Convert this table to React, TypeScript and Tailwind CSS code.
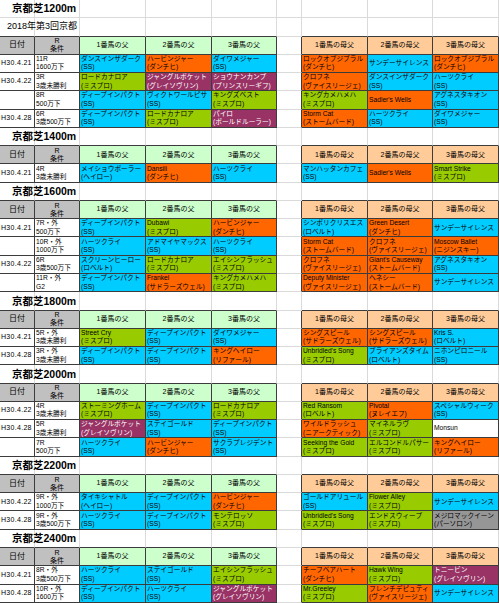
type Color = 'b' | 'o' | 'g' | 'p' | 'w' | 'k';

type Horse = { t: string; s?: string; c: Color };

type Race = { d: string; r: string; j: string; h: Horse[] };

type Section = { dist: string; races: Race[] };

const bg: Record<Color, string> = {
  b: 'bg-[#00ccff] text-black',
  o: 'bg-[#ff6600] text-black',
  g: 'bg-[#99cc00] text-black',
  p: 'bg-[#993366] text-white',
  w: 'bg-white text-black',
  k: 'bg-[#969696] text-black',
};

const sections: Section[] = [
  {
    dist: '1200m',
    races: [
      {
        d: 'H30.4.21', r: '11R', j: '1600万下',
        h: [
          { t: 'ダンスインザダーク', s: '(SS)', c: 'b' },
          { t: 'ハービンジャー', s: '(ダンチヒ)', c: 'o' },
          { t: 'ダイワメジャー', s: '(SS)', c: 'b' },
          { t: 'ロックオブジブラル', s: '(ダンチヒ)', c: 'o' },
          { t: 'サンデーサイレンス', c: 'b' },
          { t: 'ロックオブジブラル', s: '(ダンチヒ)', c: 'o' },
        ],
      },
      {
        d: 'H30.4.22', r: '3R', j: '3歳未勝利',
        h: [
          { t: 'ロードカナロア', s: '(ミスプロ)', c: 'g' },
          { t: 'ジャングルポケット', s: '(グレイソヴリン)', c: 'p' },
          { t: 'ショウナンカンプ', s: '(プリンスリーギフ)', c: 'p' },
          { t: 'クロフネ', s: '(ヴァイスリージェ)', c: 'o' },
          { t: 'ダンスインザダーク', s: '(SS)', c: 'b' },
          { t: 'ハーツクライ', s: '(SS)', c: 'b' },
        ],
      },
      {
        d: '', r: '8R', j: '500万下',
        h: [
          { t: 'ディープインパクト', s: '(SS)', c: 'b' },
          { t: 'ヴィクトワールピサ', s: '(SS)', c: 'b' },
          { t: 'キングズベスト', s: '(ミスプロ)', c: 'g' },
          { t: 'キングカメハメハ', s: '(ミスプロ)', c: 'g' },
          { t: "Sadler's Wells", c: 'o' },
          { t: 'アグネスタキオン', s: '(SS)', c: 'b' },
        ],
      },
      {
        d: 'H30.4.28', r: '6R', j: '3歳500万下',
        h: [
          { t: 'ディープインパクト', s: '(SS)', c: 'b' },
          { t: 'ロードカナロア', s: '(ミスプロ)', c: 'g' },
          { t: 'パイロ', s: '(ボールドルーラー)', c: 'p' },
          { t: 'Storm Cat', s: '(ストームバード)', c: 'o' },
          { t: 'ハーツクライ', s: '(SS)', c: 'b' },
          { t: 'ダイワメジャー', s: '(SS)', c: 'b' },
        ],
      },
    ],
  },
  {
    dist: '1400m',
    races: [
      {
        d: 'H30.4.21', r: '4R', j: '3歳未勝利',
        h: [
          { t: 'メイショウボーラー', s: '(ヘイロー)', c: 'b' },
          { t: 'Dansili', s: '(ダンチヒ)', c: 'o' },
          { t: 'ハーツクライ', s: '(SS)', c: 'b' },
          { t: 'マンハッタンカフェ', s: '(SS)', c: 'b' },
          { t: "Sadler's Wells", c: 'o' },
          { t: 'Smart Strike', s: '(ミスプロ)', c: 'g' },
        ],
      },
    ],
  },
  {
    dist: '1600m',
    races: [
      {
        d: 'H30.4.21', r: '7R・外', j: '500万下',
        h: [
          { t: 'ディープインパクト', s: '(SS)', c: 'b' },
          { t: 'Dubawi', s: '(ミスプロ)', c: 'g' },
          { t: 'ハービンジャー', s: '(ダンチヒ)', c: 'o' },
          { t: 'シンボリクリスエス', s: '(ロベルト)', c: 'b' },
          { t: 'Green Desert', s: '(ダンチヒ)', c: 'o' },
          { t: 'サンデーサイレンス', c: 'b' },
        ],
      },
      {
        d: '', r: '10R・外', j: '1000万下',
        h: [
          { t: 'ハーツクライ', s: '(SS)', c: 'b' },
          { t: 'アドマイヤマックス', s: '(SS)', c: 'b' },
          { t: 'ハーツクライ', s: '(SS)', c: 'b' },
          { t: 'Storm Cat', s: '(ストームバード)', c: 'o' },
          { t: 'クロフネ', s: '(ヴァイスリージェ)', c: 'o' },
          { t: 'Moscow Ballet', s: '(ニジンスキー)', c: 'o' },
        ],
      },
      {
        d: 'H30.4.22', r: '6R', j: '3歳500万下',
        h: [
          { t: 'スクリーンヒーロー', s: '(ロベルト)', c: 'b' },
          { t: 'ロードカナロア', s: '(ミスプロ)', c: 'g' },
          { t: 'エイシンフラッシュ', s: '(ミスプロ)', c: 'g' },
          { t: 'クロフネ', s: '(ヴァイスリージェ)', c: 'o' },
          { t: "Giant's Causeway", s: '(ストームバード)', c: 'o' },
          { t: 'アグネスタキオン', s: '(SS)', c: 'b' },
        ],
      },
      {
        d: '', r: '11R・外', j: 'G2',
        h: [
          { t: 'ディープインパクト', s: '(SS)', c: 'b' },
          { t: 'Frankel', s: '(サドラーズウェル)', c: 'o' },
          { t: 'キングカメハメハ', s: '(ミスプロ)', c: 'g' },
          { t: 'Deputy Minister', s: '(ヴァイスリージェ)', c: 'o' },
          { t: 'ヘネシー', s: '(ストームバード)', c: 'o' },
          { t: 'サンデーサイレンス', c: 'b' },
        ],
      },
    ],
  },
  {
    dist: '1800m',
    races: [
      {
        d: 'H30.4.21', r: '5R・外', j: '3歳未勝利',
        h: [
          { t: 'Street Cry', s: '(ミスプロ)', c: 'g' },
          { t: 'ディープインパクト', s: '(SS)', c: 'b' },
          { t: 'ダイワメジャー', s: '(SS)', c: 'b' },
          { t: 'シングスピール', s: '(サドラーズウェル)', c: 'o' },
          { t: 'シングスピール', s: '(サドラーズウェル)', c: 'o' },
          { t: 'Kris S.', s: '(ロベルト)', c: 'b' },
        ],
      },
      {
        d: 'H30.4.28', r: '3R・外', j: '3歳未勝利',
        h: [
          { t: 'ディープインパクト', s: '(SS)', c: 'b' },
          { t: 'ディープインパクト', s: '(SS)', c: 'b' },
          { t: 'キングヘイロー', s: '(リファール)', c: 'o' },
          { t: "Unbridled's Song", s: '(ミスプロ)', c: 'g' },
          { t: 'ブライアンズタイム', s: '(ロベルト)', c: 'b' },
          { t: 'ニホンピロニール', s: '(SS)', c: 'b' },
        ],
      },
    ],
  },
  {
    dist: '2000m',
    races: [
      {
        d: 'H30.4.22', r: '4R', j: '3歳未勝利',
        h: [
          { t: 'ストーミングホーム', s: '(ミスプロ)', c: 'g' },
          { t: 'ディープインパクト', s: '(SS)', c: 'b' },
          { t: 'ロードカナロア', s: '(ミスプロ)', c: 'g' },
          { t: 'Red Ransom', s: '(ロベルト)', c: 'g' },
          { t: 'Pivotal', s: '(ヌレイエフ)', c: 'o' },
          { t: 'スペシャルウィーク', s: '(SS)', c: 'b' },
        ],
      },
      {
        d: 'H30.4.28', r: '5R', j: '3歳未勝利',
        h: [
          { t: 'ジャングルポケット', s: '(グレイソヴリン)', c: 'p' },
          { t: 'ステイゴールド', s: '(SS)', c: 'b' },
          { t: 'ディープインパクト', s: '(SS)', c: 'b' },
          { t: 'ワイルドラッシュ', s: '(ニアークティック)', c: 'o' },
          { t: 'マイネルラヴ', s: '(ミスプロ)', c: 'g' },
          { t: 'Monsun', c: 'w' },
        ],
      },
      {
        d: '', r: '7R', j: '500万下',
        h: [
          { t: 'ハーツクライ', s: '(SS)', c: 'b' },
          { t: 'ハービンジャー', s: '(ダンチヒ)', c: 'o' },
          { t: 'サクラプレジデント', s: '(SS)', c: 'b' },
          { t: 'Seeking the Gold', s: '(ミスプロ)', c: 'g' },
          { t: 'エルコンドルパサー', s: '(ミスプロ)', c: 'g' },
          { t: 'キングヘイロー', s: '(リファール)', c: 'o' },
        ],
      },
    ],
  },
  {
    dist: '2200m',
    races: [
      {
        d: 'H30.4.22', r: '9R・外', j: '1000万下',
        h: [
          { t: 'タイキシャトル', s: '(ヘイロー)', c: 'b' },
          { t: 'ディープインパクト', s: '(SS)', c: 'b' },
          { t: 'ハービンジャー', s: '(ダンチヒ)', c: 'o' },
          { t: 'ゴールドアリュール', s: '(SS)', c: 'b' },
          { t: 'Flower Alley', s: '(ミスプロ)', c: 'g' },
          { t: 'サンデーサイレンス', c: 'b' },
        ],
      },
      {
        d: 'H30.4.28', r: '9R・外', j: '3歳500万下',
        h: [
          { t: 'ハーツクライ', s: '(SS)', c: 'b' },
          { t: 'ディープインパクト', s: '(SS)', c: 'b' },
          { t: 'モンテロッソ', s: '(ミスプロ)', c: 'g' },
          { t: "Unbridled's Song", s: '(ミスプロ)', c: 'g' },
          { t: 'エンドスウィープ', s: '(ミスプロ)', c: 'g' },
          { t: 'メジロマックイーン', s: '(パーソロン)', c: 'k' },
        ],
      },
    ],
  },
  {
    dist: '2400m',
    races: [
      {
        d: 'H30.4.21', r: '8R・外', j: '3歳500万下',
        h: [
          { t: 'ハーツクライ', s: '(SS)', c: 'b' },
          { t: 'ステイゴールド', s: '(SS)', c: 'b' },
          { t: 'エイシンフラッシュ', s: '(ミスプロ)', c: 'g' },
          { t: 'チーフベアハート', s: '(ダンチヒ)', c: 'o' },
          { t: 'Hawk Wing', s: '(ミスプロ)', c: 'g' },
          { t: 'トニービン', s: '(グレイソヴリン)', c: 'p' },
        ],
      },
      {
        d: 'H30.4.28', r: '10R・外', j: '1600万下',
        h: [
          { t: 'ディープインパクト', s: '(SS)', c: 'b' },
          { t: 'ハーツクライ', s: '(SS)', c: 'b' },
          { t: 'ジャングルポケット', s: '(グレイソヴリン)', c: 'p' },
          { t: 'Mr.Greeley', s: '(ミスプロ)', c: 'g' },
          { t: 'フレンチデピュティ', s: '(ヴァイスリージェ)', c: 'o' },
          { t: 'サンデーサイレンス', c: 'b' },
        ],
      },
    ],
  },
];

type Row =
  | { kind: 'title'; text: string }
  | { kind: 'sub'; text: string }
  | { kind: 'header' }
  | { kind: 'data'; race: Race };

// flatten sections into sheet rows
const rows: Row[] = [];
sections.forEach((sec, i) => {
  rows.push({ kind: 'title', text: `京都芝${sec.dist}` });
  if (i === 0) rows.push({ kind: 'sub', text: '2018年第3回京都' });
  rows.push({ kind: 'header' });
  sec.races.forEach((race) => rows.push({ kind: 'data', race }));
});

const isDark = (r: number, c: number) => {
  const row = rows[r];
  if (!row || c > 8) return false;
  return (row.kind === 'header' || row.kind === 'data') && c !== 5;
};

const font = "font-['Liberation_Sans','Noto_Sans_CJK_JP',sans-serif]";

const sireHeads = ['1番馬の父', '2番馬の父', '3番馬の父'];
const damSireHeads = ['1番馬の母父', '2番馬の母父', '3番馬の母父'];

const line = 'pl-[1px] text-[6.7px] leading-[8.5px] whitespace-nowrap';

const cellContent = (row: Row, c: number) => {
  if (row.kind === 'title') {
    if (c !== 0) return { cls: '', node: null };
    return {
      cls: 'overflow-visible',
      node: (
        <span className="pl-[12px] text-[10.5px] font-bold whitespace-nowrap leading-none">{row.text}</span>
      ),
    };
  }
  if (row.kind === 'sub') {
    if (c !== 0) return { cls: '', node: null };
    return {
      cls: 'overflow-visible',
      node: <span className="pl-[7px] text-[9px] whitespace-nowrap leading-none">{row.text}</span>,
    };
  }
  if (row.kind === 'header') {
    if (c === 0)
      return { cls: 'bg-[#c0c0c0] justify-center items-center', node: <span className="text-[8px]">日付</span> };
    if (c === 1)
      return {
        cls: 'bg-[#c0c0c0] items-center',
        node: (
          <>
            <span className="text-[7px] leading-[8px]">R</span>
            <span className="text-[7px] leading-[8px]">条件</span>
          </>
        ),
      };
    if (c >= 2 && c <= 4)
      return {
        cls: 'bg-[#ccffcc] items-center',
        node: <span className="text-[7px]">{sireHeads[c - 2]}</span>,
      };
    if (c === 5) return { cls: 'bg-white', node: null };
    return {
      cls: 'bg-[#ffcc99] items-center',
      node: <span className="text-[7px]">{damSireHeads[c - 6]}</span>,
    };
  }
  const race = row.race;
  if (c === 0)
    return {
      cls: 'bg-white',
      node: <span className="pl-[1px] text-[7px] tracking-[0.3px] whitespace-nowrap">{race.d}</span>,
    };
  if (c === 1)
    return {
      cls: 'bg-white',
      node: (
        <>
          <span className={line}>{race.r}</span>
          <span className={line}>{race.j}</span>
        </>
      ),
    };
  if (c === 5) return { cls: 'bg-white', node: null };
  const horse = race.h[c < 5 ? c - 2 : c - 3];
  return {
    cls: bg[horse.c],
    node: (
      <>
        <span className={line}>{horse.t}</span>
        {horse.s && <span className={line}>{horse.s}</span>}
      </>
    ),
  };
};

const App = () => {
  return (
    <div className={`w-[499px] h-[603px] overflow-hidden bg-white text-black ${font}`}>
      <div className="grid grid-cols-[35px_45px_66px_66px_65px_25px_66px_65px_66px] auto-rows-[18.27px]">
        {rows.map((row, r) =>
          Array.from({ length: 9 }).map((_, c) => {
            const right = isDark(r, c) || isDark(r, c + 1);
            const bottom = isDark(r, c) || isDark(r + 1, c);
            const { cls, node } = cellContent(row, c);
            return (
              <div
                key={`${r}-${c}`}
                className={`flex flex-col justify-center overflow-hidden border-r border-b ${
                  right ? 'border-r-[#3c3c3c]' : 'border-r-[#dadada]'
                } ${bottom ? 'border-b-[#3c3c3c]' : 'border-b-[#dadada]'} ${cls}`}
              >
                {node}
              </div>
            );
          })
        )}
      </div>
    </div>
  );
};

export default App;
